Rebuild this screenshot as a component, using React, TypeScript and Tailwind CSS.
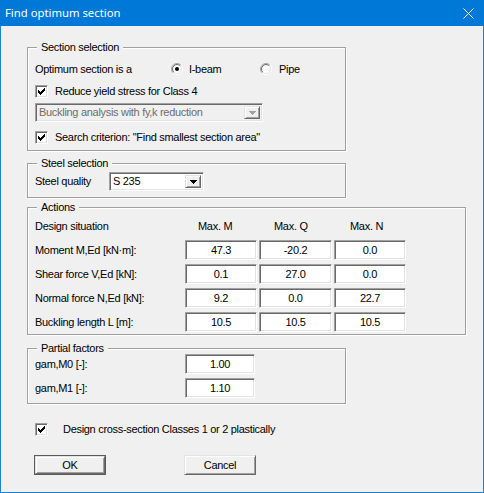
import React from "react";

const sunken =
  "border border-t-[#a0a0a0] border-l-[#a0a0a0] border-r-white border-b-white shadow-[inset_1px_1px_0_#696969,inset_-1px_-1px_0_#e3e3e3]";
const raised =
  "border border-t-[#e3e3e3] border-l-[#e3e3e3] border-r-[#696969] border-b-[#696969] shadow-[inset_1px_1px_0_#ffffff,inset_-1px_-1px_0_#a0a0a0]";

function CheckBox() {
  const cols = [2, 3, 4, 3, 2, 1, 0];
  return (
    <div className={`w-[13px] h-[13px] bg-white ${sunken} flex items-center justify-center shrink-0`}>
      <svg width="7" height="7" viewBox="0 0 7 7" shapeRendering="crispEdges">
        {cols.map((y, x) => (
          <rect key={x} x={x} y={y} width="1" height="3" fill="#000" />
        ))}
      </svg>
    </div>
  );
}

function Radio({ checked }: { checked?: boolean }) {
  const arc = (r: number, a: string, b: string) => {
    const d = r * 0.7071;
    const p1 = `${6 - d} ${6 + d}`;
    const p2 = `${6 + d} ${6 - d}`;
    return (
      <>
        <path d={`M ${p1} A ${r} ${r} 0 0 1 ${p2}`} stroke={a} fill="none" />
        <path d={`M ${p2} A ${r} ${r} 0 0 1 ${p1}`} stroke={b} fill="none" />
      </>
    );
  };
  return (
    <svg width="12" height="12" viewBox="0 0 12 12" className="shrink-0">
      <circle cx="6" cy="6" r="4.5" fill="#fff" />
      {arc(5.5, "#a0a0a0", "#ffffff")}
      {arc(4.5, "#696969", "#e3e3e3")}
      {checked && <circle cx="6" cy="6" r="2" fill="#000" />}
    </svg>
  );
}

function ArrowBtn({ disabled }: { disabled?: boolean }) {
  return (
    <div className={`w-[16px] h-full bg-[#f0f0f0] ${raised} flex items-center justify-center shrink-0`}>
      <svg width="7" height="4" viewBox="0 0 7 4" shapeRendering="crispEdges">
        <path d="M0 0 H7 L3.5 4 Z" fill={disabled ? "#a0a0a0" : "#000"} />
      </svg>
    </div>
  );
}

function Group({
  label,
  className,
  children,
}: {
  label: string;
  className: string;
  children?: React.ReactNode;
}) {
  return (
    <div
      className={`relative border border-[#a0a0a0] shadow-[inset_1px_1px_0_#ffffff,1px_1px_0_#ffffff] ${className}`}
    >
      <span className="absolute left-[9px] top-[-8px] px-[4px] bg-[#f0f0f0] leading-[14px]">{label}</span>
      {children}
    </div>
  );
}

function Field({ value, w }: { value: string; w: string }) {
  return (
    <div className={`${w} h-[20px] bg-white ${sunken} flex items-center justify-center leading-none`}>
      {value}
    </div>
  );
}

export default function App() {
  const rows = [
    ["Moment M,Ed [kN·m]:", "47.3", "-20.2", "0.0"],
    ["Shear force V,Ed [kN]:", "0.1", "27.0", "0.0"],
    ["Normal force N,Ed [kN]:", "9.2", "0.0", "22.7"],
    ["Buckling length L [m]:", "10.5", "10.5", "10.5"],
  ];
  return (
    <div className="w-[484px] h-[493px] flex flex-col bg-[#f0f0f0] font-['Liberation_Sans',Arial,sans-serif] text-[11px] tracking-[-0.3px] text-black overflow-hidden">
      <div className="h-[26px] bg-[#0078d7] flex items-center justify-between pl-[5px] pr-[10px] shrink-0">
        <span className="text-white text-[11.3px] tracking-normal font-['Noto_Sans',sans-serif] leading-none">
          Find optimum section
        </span>
        <svg width="11" height="11" viewBox="0 0 11 11">
          <path d="M0.5 0.5 L10.5 10.5 M10.5 0.5 L0.5 10.5" stroke="#fff" strokeWidth="1" />
        </svg>
      </div>
      <div className="flex-1 flex flex-col pl-[26px] border-x border-b border-[#1883d7]">
        <Group label="Section selection" className="mt-[21px] w-[319px] h-[104px] pt-[11px] pl-[7px] flex flex-col">
          <div className="h-[20px] flex items-center">
            <span className="w-[136px]">Optimum section is a</span>
            <div className="w-[89px] flex items-center">
              <Radio checked />
              <span className="ml-[6px]">I-beam</span>
            </div>
            <div className="flex items-center">
              <Radio />
              <span className="ml-[7px]">Pipe</span>
            </div>
          </div>
          <div className="h-[20px] mt-[2px] flex items-center">
            <CheckBox />
            <span className="ml-[7px]">Reduce yield stress for Class 4</span>
          </div>
          <div className={`mt-[2px] w-[228px] h-[19px] bg-[#f0f0f0] ${sunken} flex items-stretch p-[2px]`}>
            <span className="flex-1 flex items-center pl-[1px] text-[#6d6d6d]">Buckling analysis with fy,k reduction</span>
            <ArrowBtn disabled />
          </div>
          <div className="h-[20px] mt-[5px] flex items-center">
            <CheckBox />
            <span className="ml-[7px]">Search criterion: "Find smallest section area"</span>
          </div>
        </Group>

        <Group label="Steel selection" className="mt-[12px] w-[319px] h-[35px] pt-[8px] pl-[7px] flex">
          <div className="h-[19px] flex items-center">
            <span className="w-[74px]">Steel quality</span>
            <div className={`w-[95px] h-[19px] bg-white ${sunken} flex items-stretch p-[2px]`}>
              <span className="flex-1 flex items-center pl-[1px]">S 235</span>
              <ArrowBtn />
            </div>
          </div>
        </Group>

        <Group label="Actions" className="mt-[9px] w-[439px] h-[128px] pt-[8px] pl-[7px] flex flex-col">
          <div className="h-[20px] flex items-center">
            <span className="w-[163px]">Design situation</span>
            <span className="w-[76px]">Max. M</span>
            <span className="w-[76px]">Max. Q</span>
            <span className="w-[76px]">Max. N</span>
          </div>
          <div className="flex flex-col gap-[4px] mt-[4px]">
            {rows.map((r) => (
              <div key={r[0]} className="h-[20px] flex items-center">
                <span className="w-[150px]">{r[0]}</span>
                <div className="flex gap-[2px]">
                  <Field value={r[1]} w="w-[72px]" />
                  <Field value={r[2]} w="w-[73px]" />
                  <Field value={r[3]} w="w-[72px]" />
                </div>
              </div>
            ))}
          </div>
        </Group>

        <Group label="Partial factors" className="mt-[13px] w-[319px] h-[56px] pt-[5px] pl-[7px] flex flex-col gap-[4px]">
          <div className="h-[20px] flex items-center">
            <span className="w-[150px]">gam,M0 [-]:</span>
            <Field value="1.00" w="w-[70px]" />
          </div>
          <div className="h-[20px] flex items-center">
            <span className="w-[150px]">gam,M1 [-]:</span>
            <Field value="1.10" w="w-[70px]" />
          </div>
        </Group>

        <div className="mt-[15px] h-[20px] pl-[8px] flex items-center">
          <CheckBox />
          <span className="ml-[15px]">Design cross-section Classes 1 or 2 plastically</span>
        </div>

        <div className="mt-[16px] pl-[7px] flex">
          <div className="w-[72px] h-[20px] border border-[#5a5a5a]">
            <div className={`w-full h-full ${raised} flex items-center justify-center`}>OK</div>
          </div>
          <div className={`ml-[78px] w-[72px] h-[20px] ${raised} flex items-center justify-center`}>Cancel</div>
        </div>
      </div>
    </div>
  );
}
